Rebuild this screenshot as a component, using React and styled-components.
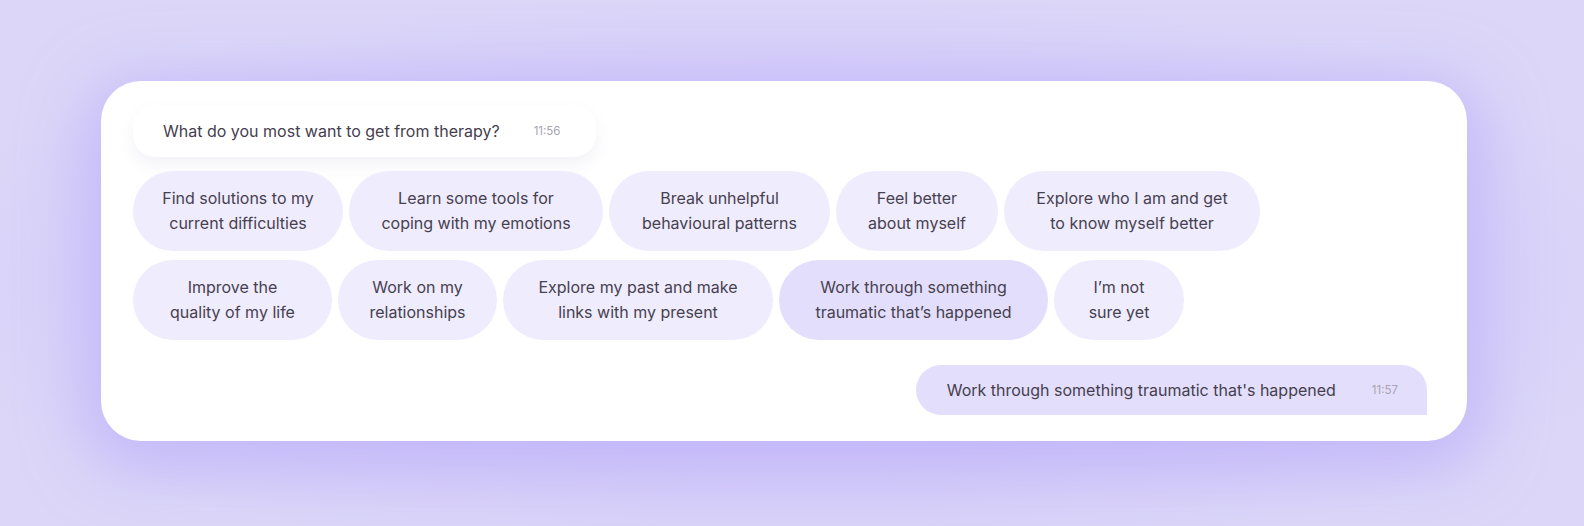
import React from 'react';
import styled, { createGlobalStyle } from 'styled-components';

const GlobalStyle = createGlobalStyle`
  html, body {
    margin: 0;
    padding: 0;
  }
  body {
    background: #dbd5f8;
    font-family: Inter, 'Noto Sans', sans-serif;
    -webkit-font-smoothing: antialiased;
  }
`;

// [line 1, line 2, width, selected]
const options = [
  [
    ['Find solutions to my', 'current difficulties', 210],
    ['Learn some tools for', 'coping with my emotions', 254],
    ['Break unhelpful', 'behavioural patterns', 221],
    ['Feel better', 'about myself', 162],
    ['Explore who I am and get', 'to know myself better', 256],
  ],
  [
    ['Improve the', 'quality of my life', 199],
    ['Work on my', 'relationships', 159],
    ['Explore my past and make', 'links with my present', 270],
    ['Work through something', 'traumatic that\u2019s happened', 269, true],
    ['I\u2019m not', 'sure yet', 130],
  ],
];

export default function App() {
  return (
    <Page>
      <GlobalStyle />
      <Card>
        <Question>
          <span>What do you most want to get from therapy?</span>
          <Time>11:56</Time>
        </Question>
        <Options>
          {options.map((row, i) => (
            <ChipRow key={i}>
              {row.map(([a, b, w, selected]) => (
                <Chip key={a} $w={w} $selected={selected}>
                  {a}
                  <br />
                  {b}
                </Chip>
              ))}
            </ChipRow>
          ))}
        </Options>
        <ReplyRow>
          <Reply>
            <span>Work through something traumatic that's happened</span>
            <Time>11:57</Time>
          </Reply>
        </ReplyRow>
      </Card>
    </Page>
  );
}

const Page = styled.div`
  width: 1584px;
  height: 526px;
  overflow: hidden;
  box-sizing: border-box;
  padding: 81px 0 0 101px;
  background: radial-gradient(ellipse 900px 300px at 790px 280px, #cac1fa 0%, #d4ccf9 55%, #dcd7f8 100%);
`;

const Card = styled.div`
  width: 1366px;
  height: 360px;
  box-sizing: border-box;
  background: #ffffff;
  border-radius: 40px;
  padding: 24px 40px 26px 32px;
  box-shadow: 0 14px 60px 18px rgba(180, 165, 250, 0.55);
  display: flex;
  flex-direction: column;
`;

const Question = styled.div`
  align-self: flex-start;
  display: flex;
  align-items: center;
  gap: 34px;
  height: 52px;
  box-sizing: border-box;
  padding: 0 36px 0 30px;
  border-radius: 22px;
  background: #ffffff;
  box-shadow: 0 8px 16px rgba(120, 110, 170, 0.09);
  color: #45404f;
  font-size: 16px;
`;

const Time = styled.span`
  font-size: 11.5px;
  color: #a9a5b2;
`;

const Options = styled.div`
  margin-top: 14px;
  display: flex;
  flex-direction: column;
  gap: 9px;
`;

const ChipRow = styled.div`
  display: flex;
  gap: 6px;
`;

const Chip = styled.div`
  width: ${(p) => p.$w}px;
  height: 80px;
  box-sizing: border-box;
  display: flex;
  align-items: center;
  justify-content: center;
  text-align: center;
  white-space: nowrap;
  border-radius: 40px;
  background: ${(p) => (p.$selected ? '#e3defb' : '#efecfd')};
  color: #46414f;
  font-size: 16px;
  line-height: 25px;
`;

const ReplyRow = styled.div`
  margin-top: auto;
  display: flex;
  justify-content: flex-end;
`;

const Reply = styled.div`
  display: flex;
  align-items: center;
  gap: 36px;
  height: 50px;
  box-sizing: border-box;
  padding: 0 29px 0 31px;
  border-radius: 25px 25px 0 25px;
  background: #e3defb;
  color: #45404f;
  font-size: 16px;
`;
